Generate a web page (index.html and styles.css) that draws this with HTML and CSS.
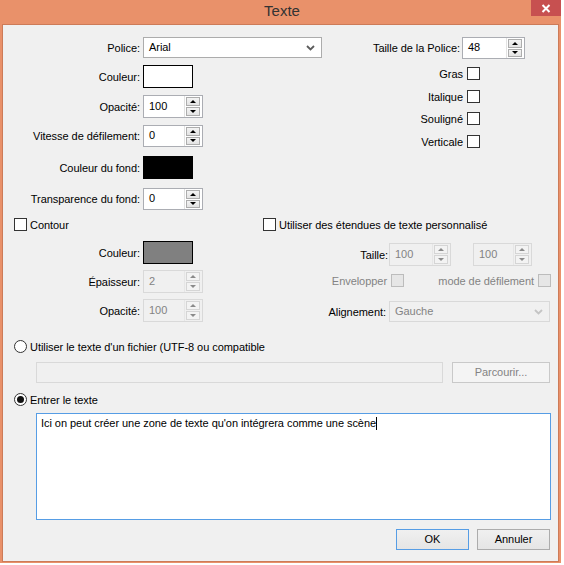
FILE: index.html
```html
<!DOCTYPE html>
<html lang="fr">
<head>
<meta charset="utf-8">
<title>Texte</title>
<link rel="stylesheet" href="styles.css">
</head>
<body>
<div class="window">
  <div class="titlebar">
    <span class="title">Texte</span>
    <div class="close">
      <svg width="10" height="9" viewBox="0 0 10 9"><path d="M1.5 1 L8.5 8 M8.5 1 L1.5 8" stroke="#fff" stroke-width="2" fill="none"/></svg>
    </div>
  </div>
  <div class="client">
    <div class="top">
      <div class="lcol">
        <div class="row r-police">
          <span class="lbl">Police:</span>
          <div class="combo w-police"><span>Arial</span><svg class="chev" width="9" height="6" viewBox="0 0 9 6"><path d="M1 1 L4.5 4.5 L8 1" stroke="#5c5c5c" stroke-width="1.8" fill="none"/></svg></div>
        </div>
        <div class="row r-couleur">
          <span class="lbl">Couleur:</span>
          <div class="swatch white"></div>
        </div>
        <div class="row r-opac">
          <span class="lbl">Opacité:</span>
          <div class="spin"><span class="val">100</span><div class="btns"><span class="sb up"></span><span class="sb down"></span></div></div>
        </div>
        <div class="row r-vit">
          <span class="lbl">Vitesse de défilement:</span>
          <div class="spin h22"><span class="val">0</span><div class="btns"><span class="sb up"></span><span class="sb down"></span></div></div>
        </div>
        <div class="row r-fond">
          <span class="lbl">Couleur du fond:</span>
          <div class="swatch black"></div>
        </div>
        <div class="row r-transp">
          <span class="lbl">Transparence du fond:</span>
          <div class="spin h22"><span class="val">0</span><div class="btns"><span class="sb up"></span><span class="sb down"></span></div></div>
        </div>
      </div>
      <div class="rcol">
        <div class="row r-taille">
          <span class="lbl-r">Taille de la Police:</span>
          <div class="spin w63 h22"><span class="val">48</span><div class="btns"><span class="sb up"></span><span class="sb down"></span></div></div>
        </div>
        <div class="row chk c1"><span class="clbl">Gras</span><span class="cb"></span></div>
        <div class="row chk c2"><span class="clbl">Italique</span><span class="cb"></span></div>
        <div class="row chk c3"><span class="clbl">Souligné</span><span class="cb"></span></div>
        <div class="row chk c4"><span class="clbl">Verticale</span><span class="cb"></span></div>
      </div>
    </div>

    <div class="mid">
      <div class="l2">
        <div class="row contour"><span class="cb"></span><span class="after">Contour</span></div>
        <div class="row m-couleur">
          <span class="lbl">Couleur:</span>
          <div class="swatch gray"></div>
        </div>
        <div class="row m-ep">
          <span class="lbl">Épaisseur:</span>
          <div class="spin dis"><span class="val">2</span><div class="btns"><span class="sb up"></span><span class="sb down"></span></div></div>
        </div>
        <div class="row m-op">
          <span class="lbl">Opacité:</span>
          <div class="spin dis"><span class="val">100</span><div class="btns"><span class="sb up"></span><span class="sb down"></span></div></div>
        </div>
      </div>
      <div class="r2">
        <div class="row util"><span class="cb"></span><span class="after">Utiliser des étendues de texte personnalisé</span></div>
        <div class="row taille2">
          <span class="lbl2">Taille:</span>
          <div class="spin dis w62"><span class="val">100</span><div class="btns"><span class="sb up"></span><span class="sb down"></span></div></div>
          <div class="spin dis w59 sp2"><span class="val">100</span><div class="btns"><span class="sb up"></span><span class="sb down"></span></div></div>
        </div>
        <div class="row env">
          <span class="lbl-env gray-t">Envelopper</span><span class="cb dis"></span>
          <span class="lbl-mode gray-t">mode de défilement</span><span class="cb dis"></span>
        </div>
        <div class="row align">
          <span class="lbl-al">Alignement:</span>
          <div class="combo dis w-al"><span>Gauche</span><svg class="chev" width="9" height="6" viewBox="0 0 9 6"><path d="M1 1 L4.5 4.5 L8 1" stroke="#c4c4c4" stroke-width="1.8" fill="none"/></svg></div>
        </div>
      </div>
    </div>

    <div class="row radio1"><span class="rb"></span><span class="after">Utiliser le texte d'un fichier (UTF-8 ou compatible</span></div>
    <div class="row file">
      <div class="finput"></div>
      <div class="btn dis browse">Parcourir...</div>
    </div>
    <div class="row radio2"><span class="rb on"></span><span class="after">Entrer le texte</span></div>
    <div class="ta">Ici on peut créer une zone de texte qu'on intégrera comme une scène<span class="caret"></span></div>
    <div class="actions">
      <div class="btn def">OK</div>
      <div class="btn">Annuler</div>
    </div>
  </div>
</div>
</body>
</html>
```

FILE: styles.css
```css
* { box-sizing: border-box; }
html, body { margin: 0; padding: 0; }
body {
  background: #ffffff;
  font-family: "Liberation Sans", Arial, sans-serif;
  font-size: 11px;
  letter-spacing: -0.05px;
  color: #000;
  width: 564px;
  height: 565px;
  overflow: hidden;
}
.window {
  width: 561px;
  height: 563px;
  background: #e9916a;
  display: flex;
  flex-direction: column;
}
.titlebar {
  height: 24px;
  flex: none;
  display: grid;
  grid-template-columns: 1fr auto 1fr;
}
.title {
  grid-column: 2;
  font-family: "Liberation Sans", Arial, sans-serif;
  font-size: 15px;
  letter-spacing: 0;
  color: #333;
  line-height: 22px;
  padding-left: 3px;
}
.close {
  grid-column: 3;
  justify-self: end;
  width: 30px;
  height: 16px;
  background: #c75050;
  display: flex;
  align-items: center;
  justify-content: center;
}
.close svg { display: block; }
.client {
  margin: 0 2px;
  border: 1px solid #cd7b58;
  background: #f0f0f0;
  height: 538px;
}
.row { display: flex; align-items: center; }
.top { display: flex; padding-top: 12px; }
.lcol { width: 319px; flex: none; display: flex; flex-direction: column; }
.lbl { width: 137px; flex: none; text-align: right; margin-right: 3px; white-space: nowrap; }
.r-couleur { margin-top: 7px; }
.r-opac { margin-top: 7px; }
.r-vit { margin-top: 7px; }
.r-fond { margin-top: 9px; }
.r-transp { margin-top: 9px; }

.combo {
  height: 21px;
  border: 1px solid #acacac;
  background: #fff;
  display: flex;
  align-items: center;
  justify-content: space-between;
  padding: 0 6px 1px 5px;
}
.combo .chev { display: block; margin-top: 1px; }
.w-police { width: 179px; }
.combo.dis { background: #f0f0f0; border-color: #d9d9d9; color: #838383; }
.w-al { width: 161px; }

.swatch { width: 50px; height: 23px; border: 1px solid #000; }
.swatch.white { background: #fff; }
.swatch.black { background: #000; }
.swatch.gray { background: #808080; }

.spin {
  width: 60px;
  height: 23px;
  border: 1px solid #abadb3;
  background: #fff;
  display: flex;
}
.spin.h22 { height: 22px; }
.spin.w63 { width: 63px; }
.spin.w62 { width: 62px; }
.spin.w59 { width: 59px; }
.spin .val {
  flex: 1;
  display: flex;
  align-items: center;
  padding: 0 0 2px 5px;
}
.btns {
  width: 18px;
  flex: none;
  display: flex;
  flex-direction: column;
  gap: 1px;
  padding: 1px 2px 1px 1px;
  border-left: 1px solid #e2e2e2;
}
.sb {
  flex: 1;
  border: 1px solid #adadad;
  background: linear-gradient(#f4f4f4, #e3e3e3);
  display: flex;
  align-items: center;
  justify-content: center;
}
.sb::after {
  content: "";
  width: 0;
  height: 0;
  border-left: 3px solid transparent;
  border-right: 3px solid transparent;
}
.sb.up::after { border-bottom: 3px solid #000; }
.sb.down::after { border-top: 3px solid #000; }
.spin.dis { background: #f0f0f0; border-color: #d9d9d9; color: #838383; }
.spin.dis .btns { border-left-color: #e6e6e6; }
.spin.dis .sb { border-color: #d5d5d5; background: #f3f3f3; }
.spin.dis .sb.up::after { border-bottom-color: #8a8a8a; }
.spin.dis .sb.down::after { border-top-color: #8a8a8a; }

.rcol { width: 203px; flex: none; display: flex; flex-direction: column; }
.r-taille { justify-content: flex-end; }
.lbl-r { margin-right: 2px; white-space: nowrap; }
.chk { justify-content: flex-end; padding-right: 45px; height: 13px; }
.clbl { margin-right: 4px; }
.c1 { margin-top: 8px; }
.c2 { margin-top: 10px; }
.c3 { margin-top: 9px; }
.c4 { margin-top: 10px; }

.cb {
  width: 13px;
  height: 13px;
  flex: none;
  border: 1px solid #333;
  background: #fff;
}
.cb.dis { border-color: #bcbcbc; background: #e6e6e6; }
.after { margin-left: 3px; white-space: nowrap; }
.gray-t { color: #838383; }

.mid { display: flex; margin-top: 8px; }
.l2 { width: 260px; flex: none; display: flex; flex-direction: column; }
.contour { padding-left: 11px; height: 13px; }
.m-couleur { margin-top: 10px; }
.m-ep { margin-top: 6px; }
.m-op { margin-top: 6px; }

.r2 { flex: 1; display: flex; flex-direction: column; }
.util { height: 13px; }
.taille2 { margin-top: 12px; height: 23px; }
.lbl2 { width: 125px; flex: none; text-align: right; margin-right: 1px; }
.sp2 { margin-left: 22px; }
.env { margin-top: 8px; height: 13px; }
.lbl-env { width: 124px; flex: none; text-align: right; margin-right: 4px; }
.lbl-mode { width: 130px; flex: none; text-align: right; margin-right: 4px; white-space: nowrap; }
.align { margin-top: 14px; height: 21px; }
.lbl-al { width: 123px; flex: none; text-align: right; margin-right: 3px; }

.rb {
  width: 13px;
  height: 13px;
  flex: none;
  border: 1px solid #333;
  border-radius: 50%;
  background: #fff;
  display: flex;
  align-items: center;
  justify-content: center;
}
.rb.on::after {
  content: "";
  width: 7px;
  height: 7px;
  border-radius: 50%;
  background: #111;
}
.radio1 { margin-top: 18px; padding-left: 11px; height: 13px; }
.file { margin-top: 9px; padding-left: 33px; height: 21px; }
.finput { width: 407px; height: 21px; flex: none; border: 1px solid #d9d9d9; background: #f0f0f0; }
.radio2 { margin-top: 10px; padding-left: 11px; height: 13px; }

.ta {
  margin: 7px 0 0 33px;
  width: 515px;
  height: 107px;
  border: 1px solid #569de5;
  background: #fff;
  padding: 3px 4px;
  line-height: 13px;
  white-space: nowrap;
}
.caret {
  display: inline-block;
  width: 1px;
  height: 13px;
  background: #000;
  vertical-align: top;
}
.actions {
  margin-top: 9px;
  display: flex;
  justify-content: flex-end;
  padding-right: 8px;
  gap: 8px;
}
.btn {
  width: 73px;
  height: 21px;
  flex: none;
  border: 1px solid #acacac;
  background: linear-gradient(#f0f0f0, #e5e5e5);
  display: flex;
  align-items: center;
  justify-content: center;
  padding-bottom: 1px;
}
.btn.def { border-color: #569de5; }
.btn.dis { border-color: #c9c9c9; background: #f4f4f4; color: #838383; }
.btn.browse { width: 98px; margin-left: 9px; }
```
